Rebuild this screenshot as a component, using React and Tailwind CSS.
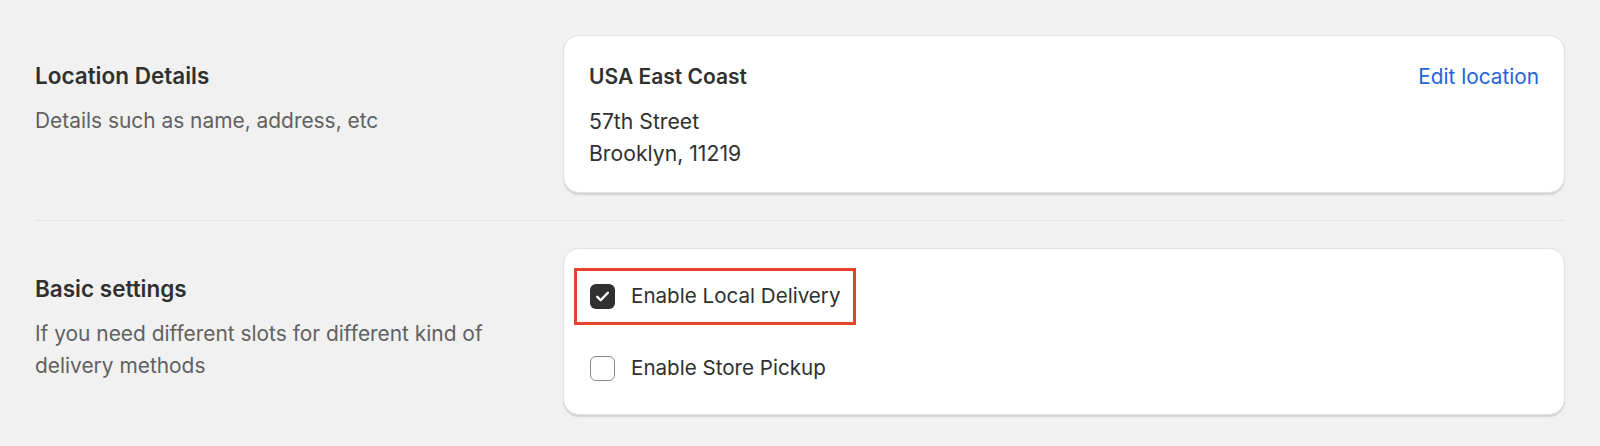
import React, { useState } from "react";

const font = { fontFamily: "Inter, 'Noto Sans', sans-serif" };

const Checkbox = ({ checked, onChange, label, highlight }) => {
  return (
    <label className="relative inline-flex items-center gap-4 cursor-pointer h-8 select-none">
      {highlight && (
        <span className="absolute -left-4 -right-4 -top-[12px] -bottom-[13px] border-[3px] border-[#e5432b] pointer-events-none" />
      )}
      <input type="checkbox" className="sr-only" checked={checked} onChange={onChange} />
      {checked ? (
        <span className="w-[25px] h-[25px] rounded-[6px] bg-[#303030] flex items-center justify-center">
          <svg width="17" height="17" viewBox="0 0 14 14" fill="none">
            <path d="M2.7 7.3l2.8 2.8 5.9-6.2" stroke="white" strokeWidth="2" strokeLinecap="round" strokeLinejoin="round" />
          </svg>
        </span>
      ) : (
        <span className="w-[25px] h-[25px] rounded-[6px] bg-white border-[1.5px] border-[#8a8a8a]" />
      )}
      <span className="text-[20.6px] text-[#303030]">{label}</span>
    </label>
  );
};

const SectionInfo = ({ title, children }) => (
  <div className="w-[528px] shrink-0 pt-[25px] pr-14">
    <h2 className="text-[22.5px] leading-8 font-semibold text-[#303030]">{title}</h2>
    <p className="mt-[13px] text-[20.9px] leading-8 text-[#616161]">{children}</p>
  </div>
);

const Card = ({ children, className = "" }) => (
  <div
    className={`flex-1 bg-white rounded-[16px] border border-[#e3e3e3] shadow-[0_1.5px_1px_rgba(0,0,0,0.12)] ${className}`}
  >
    {children}
  </div>
);

export default function App() {
  const [localDelivery, setLocalDelivery] = useState(true);
  const [storePickup, setStorePickup] = useState(false);

  return (
    <div className="min-h-[446px] bg-[#f1f1f1] px-[35px] pt-[35px]" style={font}>
      {/* Location details */}
      <div className="flex">
        <SectionInfo title="Location Details">Details such as name, address, etc</SectionInfo>
        <Card className="pt-[25px] pb-[23px] px-[25px]">
          <div className="flex items-center justify-between">
            <p className="text-[21px] leading-8 font-semibold text-[#303030]">USA East Coast</p>
            <a href="#" className="text-[20.8px] leading-8 text-[#2563d9]">
              Edit location
            </a>
          </div>
          <div className="mt-3 text-[21.2px] leading-8 text-[#303030]">
            <p>57th Street</p>
            <p>Brooklyn, 11219</p>
          </div>
        </Card>
      </div>

      <div className="my-[27px] h-px bg-[#e4e4e4]" />

      {/* Basic settings */}
      <div className="flex">
        <SectionInfo title="Basic settings">
          If you need different slots for different kind of delivery methods
        </SectionInfo>
        <Card className="pt-[31px] pb-[30px] px-[26px] flex flex-col items-start gap-10">
          <Checkbox
            checked={localDelivery}
            onChange={() => setLocalDelivery(!localDelivery)}
            label="Enable Local Delivery"
            highlight
          />
          <Checkbox
            checked={storePickup}
            onChange={() => setStorePickup(!storePickup)}
            label="Enable Store Pickup"
          />
        </Card>
      </div>
    </div>
  );
}
